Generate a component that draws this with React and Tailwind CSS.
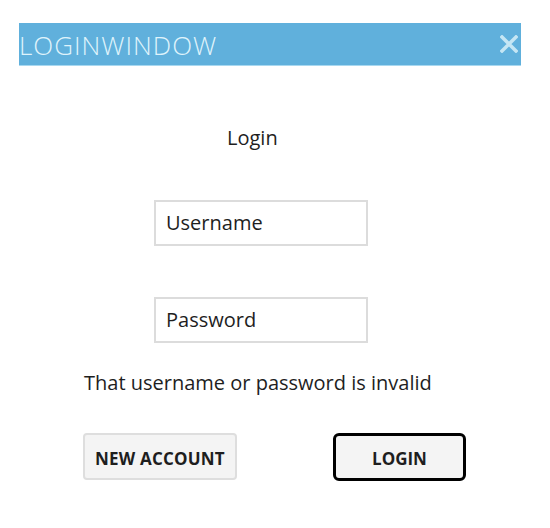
export default function App() {
  const font = { fontFamily: '"Open Sans", "Noto Sans", sans-serif' };
  return (
    <div className="w-[550px] h-[528px] bg-white text-[#1e1e1e]" style={font}>
      <div className="pt-[23px] pl-[19px]">
        <div className="w-[502px] h-[43px] bg-[#60b0dc] border-b border-[#a8d8f0] flex items-center justify-between">
          <span className="text-[26px] font-light text-[#dff3fb] leading-none tracking-[1px] mt-[1px]">LOGINWINDOW</span>
          <svg width="18" height="18" viewBox="0 0 18 18" className="mr-[3px]">
            <path d="M2 2 L16 16 M16 2 L2 16" stroke="#c5e6f4" strokeWidth="3.5" strokeLinecap="square" />
          </svg>
        </div>
      </div>
      <div className="flex flex-col">
        <div className="mt-[60px] pl-[227px] text-[20px] leading-[24px]">Login</div>
        <div className="mt-[50px] ml-[154px] w-[214px] h-[46px] border-2 border-[#dcdcdc] flex items-center pl-[10px] text-[20px]">Username</div>
        <div className="mt-[51px] ml-[154px] w-[214px] h-[46px] border-2 border-[#dcdcdc] flex items-center pl-[10px] text-[20px]">Password</div>
        <div className="pl-[84px] mt-[28px] text-[20px] leading-[24px]">That username or password is invalid</div>
      </div>
      <div className="flex items-start pl-[83px] mt-[38px]">
        <div className="w-[154px] h-[47px] border-2 border-[#dedede] rounded-[4px] bg-[#f4f4f4] flex items-center justify-center text-[17px] font-bold tracking-[0.2px]">
          <span className="mt-[4px]">NEW ACCOUNT</span>
        </div>
        <div className="ml-[96px] w-[133px] h-[48px] border-[3px] border-black rounded-[6px] bg-[#f4f4f4] flex items-center justify-center text-[17px] font-bold">
          <span className="mt-[4px]">LOGIN</span>
        </div>
      </div>
    </div>
  );
}
